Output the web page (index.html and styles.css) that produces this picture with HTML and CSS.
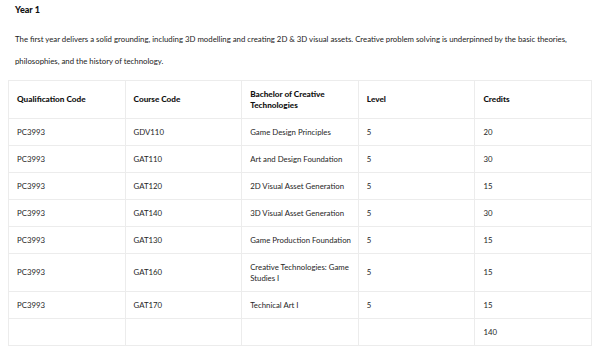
FILE: index.html
```html
<!DOCTYPE html>
<html lang="en">
<head>
<meta charset="utf-8">
<title>Year 1</title>
<link rel="stylesheet" href="styles.css">
</head>
<body>
<main class="page">
  <h4 class="year-title">Year 1</h4>
  <p class="intro">The first year delivers a solid grounding, including 3D modelling and creating 2D &amp; 3D visual assets. Creative problem solving is underpinned by the basic theories, philosophies, and the history of technology.</p>
  <table class="courses">
    <thead>
      <tr>
        <th>Qualification Code</th>
        <th>Course Code</th>
        <th>Bachelor of Creative Technologies</th>
        <th>Level</th>
        <th>Credits</th>
      </tr>
    </thead>
    <tbody>
      <tr><td>PC3993</td><td>GDV110</td><td>Game Design Principles</td><td>5</td><td>20</td></tr>
      <tr><td>PC3993</td><td>GAT110</td><td>Art and Design Foundation</td><td>5</td><td>30</td></tr>
      <tr><td>PC3993</td><td>GAT120</td><td>2D Visual Asset Generation</td><td>5</td><td>15</td></tr>
      <tr><td>PC3993</td><td>GAT140</td><td>3D Visual Asset Generation</td><td>5</td><td>30</td></tr>
      <tr><td>PC3993</td><td>GAT130</td><td>Game Production Foundation</td><td>5</td><td>15</td></tr>
      <tr><td>PC3993</td><td>GAT160</td><td>Creative Technologies: Game Studies I</td><td>5</td><td>15</td></tr>
      <tr><td>PC3993</td><td>GAT170</td><td>Technical Art I</td><td>5</td><td>15</td></tr>
      <tr><td></td><td></td><td></td><td></td><td>140</td></tr>
    </tbody>
  </table>
</main>
</body>
</html>
```

FILE: styles.css
```css
html, body {
  margin: 0;
  padding: 0;
  background: #ffffff;
}

.page {
  padding: 0 8px;
  font-family: Lato, "Open Sans", sans-serif;
  color: #222222;
}

.year-title {
  margin: 0;
  padding-left: 7px;
  font-size: 9px;
  line-height: 20px;
  font-weight: 900;
  color: #111111;
}

.intro {
  margin: 8px 0 8px;
  padding-left: 7px;
  font-size: 7.8px;
  line-height: 22px;
  color: #222222;
}

.courses {
  width: 584px;
  border-collapse: collapse;
  table-layout: fixed;
  font-size: 7.8px;
  line-height: 11px;
}

.courses th,
.courses td {
  border: 1px solid #ececec;
  padding: 7.5px 3px 7.5px 8px;
  text-align: left;
  vertical-align: middle;
}

.courses th {
  font-size: 8.2px;
  font-weight: 900;
  color: #111111;
}

.courses td {
  color: #262626;
}
```
